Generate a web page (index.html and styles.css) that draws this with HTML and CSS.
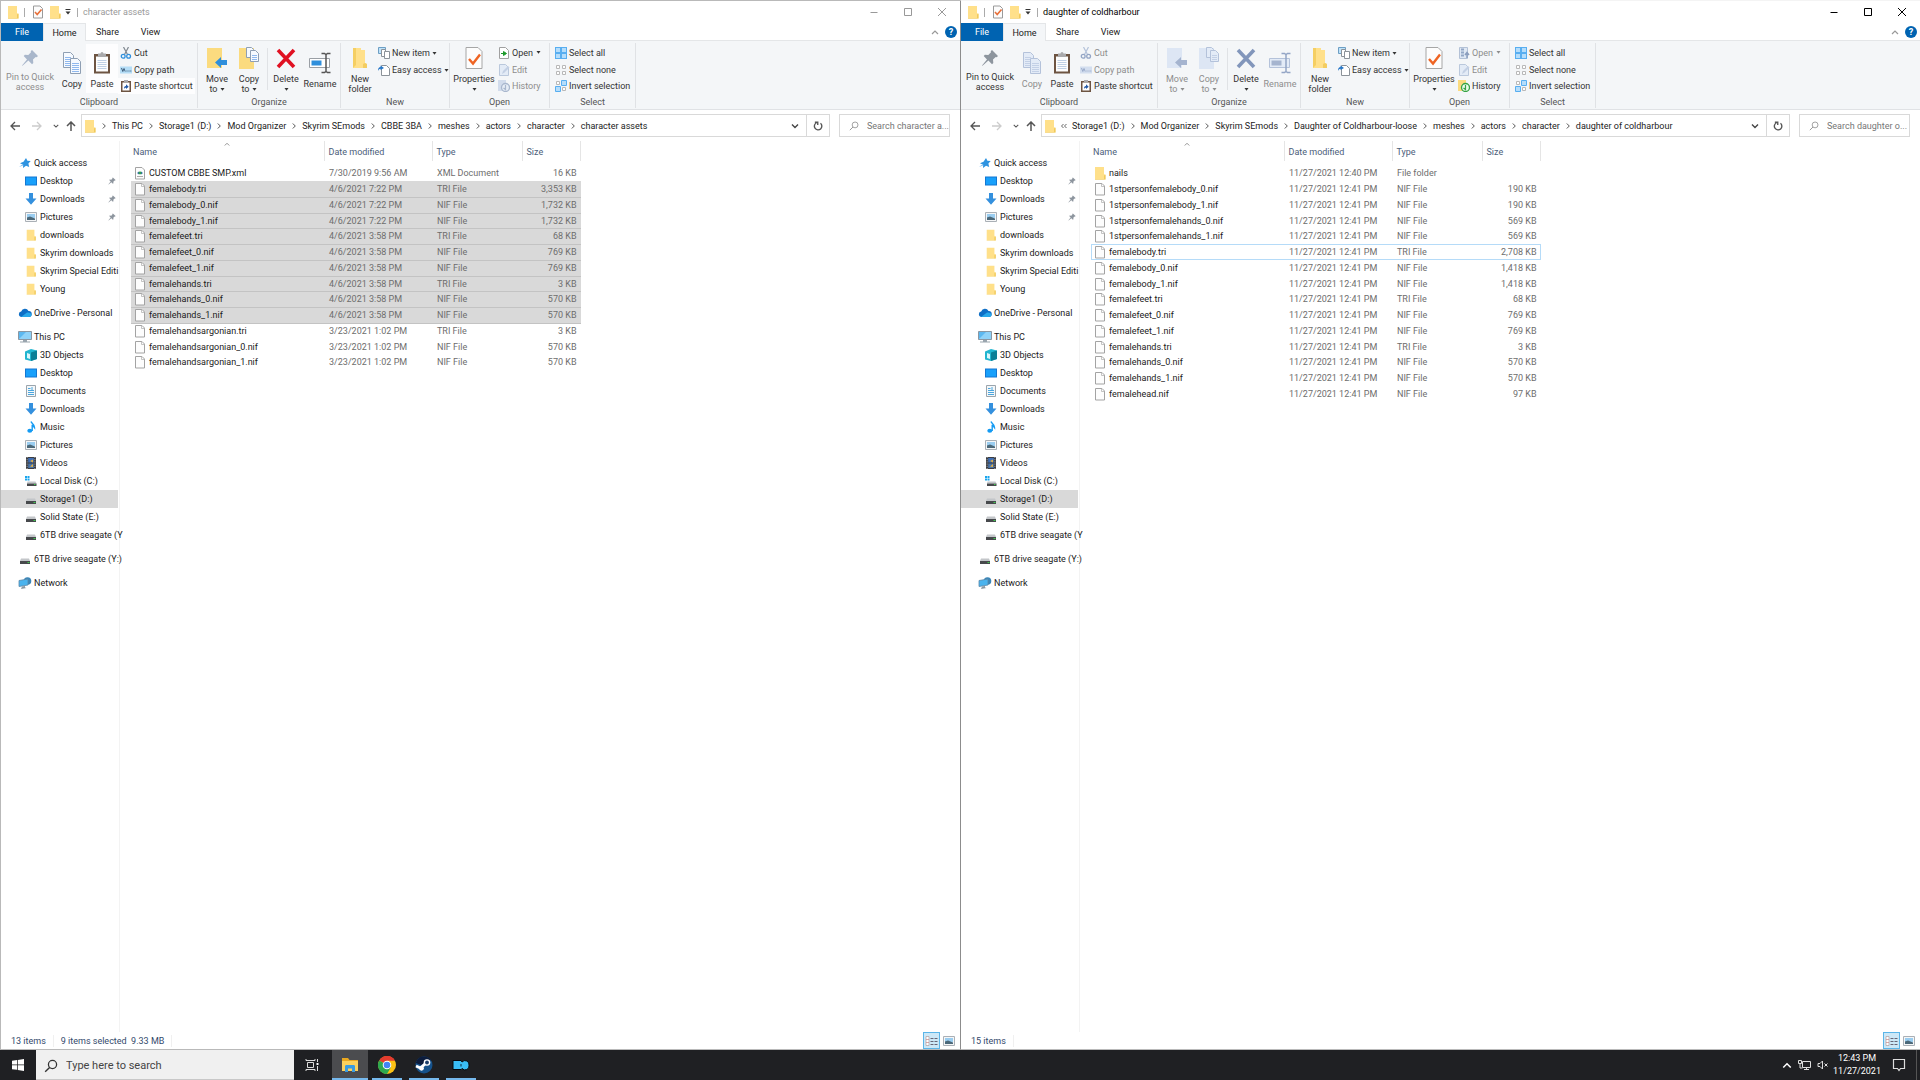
FILE: index.html
```html
<!DOCTYPE html>
<html lang="en">
<head>
<meta charset="utf-8">
<title>File Explorer</title>
<link rel="stylesheet" href="styles.css">
</head>
<body>
<svg class="sprite" aria-hidden="true">
  <symbol id="folder" viewBox="0 0 12 14"><path d="M1 1h9v7l1.500 1v4.500H1z" fill="#ffe08a"/><path d="M1 13h9V9.500L11.500 8.500v5H1z" fill="#f0c95c"/></symbol>
  <symbol id="tick" viewBox="0 0 12 14"><path d="M1.500 1h6.500l2.500 2.500V13h-9z" fill="#fcfcfc" stroke="#9a9a9a"/><path d="M3 7l2.200 2.600L9.500 4.500" fill="none" stroke="#e8703a" stroke-width="1.600"/></symbol>
  <symbol id="qat" viewBox="0 0 8 8"><path d="M1.500 1.500h5" stroke="#333"/><path d="M1.500 3.500h5L4 6.500z" fill="#333"/></symbol>
  <symbol id="min" viewBox="0 0 10 10"><path d="M1.500 5.500h7" stroke="currentColor"/></symbol>
  <symbol id="max" viewBox="0 0 10 10"><path d="M1.500 1.500h7v7h-7z" fill="none" stroke="currentColor"/></symbol>
  <symbol id="close" viewBox="0 0 10 10"><path d="M1 1l8 8M9 1L1 9" stroke="currentColor"/></symbol>
  <symbol id="up" viewBox="0 0 8 8"><path d="M1 6l3-3 3 3" fill="none" stroke="currentColor" stroke-width="1.200"/></symbol>
  <symbol id="down" viewBox="0 0 8 8"><path d="M1 2.500l3 3 3-3" fill="none" stroke="currentColor" stroke-width="1.400"/></symbol>
  <symbol id="right" viewBox="0 0 8 8"><path d="M2.800 1.500L5.300 4 2.800 6.500" fill="none" stroke="#555" stroke-width="1"/></symbol>
  <symbol id="laquo" viewBox="0 0 8 8"><path d="M3.500 2L1.500 4l2 2M6.500 2l-2 2 2 2" fill="none" stroke="#555" stroke-width=".9"/></symbol>
  <symbol id="pin" viewBox="0 0 18 18"><path d="M11 1l6 6-1.300 1.300-1-.4-2.700 2.700.3 3.400-1.300 1.200-3.600-3.600L1.500 16.800 1 16.500l5-6.100L2.700 7l1.200-1.300 3.400.3L10 3.300 9.700 2.300z" fill="var(--pin,#8d959e)"/></symbol>
  <symbol id="copy" viewBox="0 0 20 22"><g fill="var(--page,#f6faff)" stroke="var(--edge,#8f9fb3)"><path d="M1.500.5h7l3 3v12h-10z"/><path d="M8.500 6.500h7l3 3v12h-10z"/></g><path d="M3 5.500h6M3 7.500h5M3 9.500h5M3 11.500h5M3 13.500h5M10 11.500h7M10 13.500h7M10 15.500h7M10 17.500h7M10 19.500h7" stroke="var(--line,#8fb8ee)"/></symbol>
  <symbol id="paste" viewBox="0 0 18 22"><path d="M1 2h16v19.500H1z" fill="#6d5442"/><path d="M3 4.500h12v15H3z" fill="#fdfdfd"/><path d="M5 1.500h2.500a1.500 1.500 0 013 0H13V5H5z" fill="#a9a9ab"/><path d="M4.500 8.500h9M4.500 10.500h9M4.500 12.500h9M4.500 14.500h9M4.500 16.500h9" stroke="#bfd0e4"/></symbol>
  <symbol id="cut" viewBox="0 0 12 12"><path d="M3.500 0L7.500 7.500M8.500 0L4.500 7.500" stroke="var(--edge,#7f8790)" stroke-width="1.200"/><g fill="none" stroke="var(--cut,#2f8fdc)" stroke-width="1.300"><circle cx="3.200" cy="9.300" r="1.900"/><circle cx="8.600" cy="9.300" r="1.900"/></g></symbol>
  <symbol id="path" viewBox="0 0 12 12"><path d="M0 2.500h12v7H0z" fill="var(--bar,#b5ddf6)"/><path d="M1.500 4l1.300 3.500L4 4.500l1.200 3M6.500 7h1M8.500 7h1M10.300 7h1" fill="none" stroke="var(--ink,#33506e)" stroke-width=".9"/></symbol>
  <symbol id="shortcut" viewBox="0 0 12 12"><path d="M1 1h10v11H1z" fill="#6d5442"/><path d="M2.500 2.500h7v8h-7z" fill="#fff"/><path d="M4 0h4v2.500H4z" fill="#a9a9ab"/><path d="M4 9c0-2 .5-3 2-3V4.300L8.700 6.700 6 9V7.700C5 7.700 4.500 8 4 9z" fill="#2159a8"/></symbol>
  <symbol id="moveto" viewBox="0 0 20 22"><path d="M0 1h15v20H0z" fill="var(--fold,#fbdb7f)"/><path d="M14 10v3h6v5h-6v3L8 15.500z" fill="var(--arrow,#2f8fdc)"/></symbol>
  <symbol id="copyto" viewBox="0 0 20 22"><path d="M0 1h15v21H0z" fill="var(--fold,#fbdb7f)"/><g fill="var(--page,#f6faff)" stroke="var(--edge,#8f9fb3)"><path d="M7.500.5h5l2 2v8h-7z"/><path d="M11.500 3.500h5l3 3v8h-8z"/></g><path d="M13 8.500h5M13 10.500h5M13 12.500h5" stroke="var(--line,#8fb8ee)"/></symbol>
  <symbol id="delete" viewBox="0 0 20 20"><path d="M2 2l16 17M18 2L2 19" fill="none" stroke="var(--del,#e01122)" stroke-width="3.600"/></symbol>
  <symbol id="rename" viewBox="0 0 22 22"><path d="M.5 6.500h20v9H.5z" fill="var(--page,#fff)" stroke="var(--edge,#9a9fa5)"/><path d="M2.500 8.500h10v5h-10z" fill="var(--arrow,#2f8fdc)"/><path d="M12.500 1.500h3l1.500 1 1.500-1h3M12.500 20.500h3l1.500-1 1.500 1h3M17 2v18" fill="none" stroke="var(--beam,#555)" stroke-width="1.500"/></symbol>
  <symbol id="newfolder" viewBox="0 0 14 20"><path d="M0 0h8v2h4v13l2 1v4H0z" fill="#ffe08a"/><path d="M0 0h3v17l-3 3z" fill="#f5cf63"/><path d="M12 15l2 1v4h-4v-4z" fill="#f3cc60"/></symbol>
  <symbol id="newitem" viewBox="0 0 12 12"><path d="M.5.500h7v6h-7z" fill="#bfe2fa" stroke="#6d9fc4"/><path d="M3.500 2.500h4v7h-4z" fill="#fff" stroke="#8b9299"/><path d="M6.500 4.500h5v7h-5z" fill="#fff" stroke="#8b9299"/></symbol>
  <symbol id="easy" viewBox="0 0 12 12"><path d="M3.500 1.500h5l3 3v7h-8z" fill="#fff" stroke="#8b9299"/><path d="M0 7c0-3 1-4 2.500-4V1.500L6 4 2.500 6V4.800C1.500 4.800.8 5.500 0 7z" fill="#2878c8"/></symbol>
  <symbol id="props" viewBox="0 0 18 22"><path d="M1 .5h12l4 4v17H1z" fill="#fdfdfd" stroke="#a6a6a6"/><path d="M4 12l4 4.500 7-9" fill="none" stroke="#ef6423" stroke-width="2.400"/></symbol>
  <symbol id="open" viewBox="0 0 12 12"><path d="M1.500.500h6l3 3v8h-9z" fill="#fff" stroke="#a0a0a0"/><path d="M3 6.500h3M5.500 4.500v4l3-2z" fill="#1c9a2a" stroke="#1c9a2a"/></symbol>
  <symbol id="openoff" viewBox="0 0 12 12"><path d="M1.500.500h8v11h-8z" fill="#dfe8f4" stroke="#b3c1d6"/><path d="M3 2.500h3M3 5.500h3M3 8.500h3" stroke="#93a7c6" stroke-width="2"/><path d="M9 11V6M7 8l2-2.500L11 8" fill="none" stroke="#8a9dbd" stroke-width="1.500"/></symbol>
  <symbol id="edit" viewBox="0 0 12 12"><path d="M1.500.500h6l3 3v8h-9z" fill="#e3ebf6" stroke="#bac8dc"/><path d="M4 10l1-3 5-5 1.500 1.500-5 5z" fill="#c3d0e4"/></symbol>
  <symbol id="history" viewBox="0 0 12 12"><path d="M0 0h8v11H0z" fill="var(--hf,#d2dcec)"/><circle cx="7.500" cy="7.500" r="4" fill="var(--hc,#e6edf6)" stroke="var(--he,#a9b7cd)" stroke-width="1.300"/><path d="M5.500 8l2 1.500V5" fill="none" stroke="var(--he,#a9b7cd)" stroke-width="1.200"/></symbol>
  <symbol id="selall" viewBox="0 0 12 12"><path d="M0 0h12v12H0z" fill="#58aef0"/><path d="M1 1h4v4H1zM7 1h4v4H7zM1 7h4v4H1zM7 7h4v4H7z" fill="#b5ddfb"/></symbol>
  <symbol id="selnone" viewBox="0 0 12 12"><path d="M1.500 1.500h3v3h-3zM7.500 1.500h3v3h-3zM1.500 7.500h3v3h-3zM7.500 7.500h3v3h-3z" fill="#fff" stroke="#b8b8b8"/></symbol>
  <symbol id="selinv" viewBox="0 0 12 12"><path d="M1.500 1.500h3v3h-3zM7.500 7.500h3v3h-3z" fill="#fff" stroke="#b8b8b8"/><path d="M6.500.500h5v5h-5zM.5 6.500h5v5h-5z" fill="#b5ddfb" stroke="#58aef0"/></symbol>
  <symbol id="caret" viewBox="0 0 5 5"><path d="M.5 1h4L2.500 3.800z" fill="currentColor"/></symbol>
  <symbol id="back" viewBox="0 0 10 10"><path d="M5 1L1 5l4 4M1 5h9" fill="none" stroke="currentColor" stroke-width="1.300"/></symbol>
  <symbol id="fwd" viewBox="0 0 10 10"><path d="M5 1l4 4-4 4M9 5H0" fill="none" stroke="currentColor" stroke-width="1.300"/></symbol>
  <symbol id="upward" viewBox="0 0 10 10"><path d="M1 5l4-4 4 4M5 1v9" fill="none" stroke="currentColor" stroke-width="1.500"/></symbol>
  <symbol id="refresh" viewBox="0 0 8 8"><path d="M6 1.800a3 3 0 11-3.200-.4M1.500 1h2.300v2.200" fill="none" stroke="#555" stroke-width="1.100"/></symbol>
  <symbol id="glass" viewBox="0 0 12 12"><circle cx="7.300" cy="4.700" r="3.500" fill="none" stroke="currentColor" stroke-width="1.100"/><path d="M4.800 7.200L1 11" stroke="currentColor" stroke-width="1.200"/></symbol>
  <symbol id="star" viewBox="0 0 12 12"><path d="M7 1l1.400 2.800 3.300.2-2.300 2.500.8 3.600-3.200-1.400L4 11l.2-3.200L1 6.200l3.500-1.400z" fill="#2e93e0"/><path d="M0 10l4-3v1.500z" fill="#7cbcee"/></symbol>
  <symbol id="desktop" viewBox="0 0 12 12"><path d="M0 1.500h12v9H0z" fill="#1377d2"/><path d="M1 2.500h10v7H1z" fill="#18a0fb"/></symbol>
  <symbol id="dl" viewBox="0 0 12 12"><path d="M4 0h4v5.500h3.500L6 11.800.5 5.500H4z" fill="#3490de"/></symbol>
  <symbol id="pic" viewBox="0 0 12 12"><path d="M.5 1.500h11v9H.5z" fill="#f5f6f7" stroke="#aab0b6"/><path d="M2 3h8v4H2z" fill="#9acdf0"/><path d="M2 6.500l3-1 5 2V9H2z" fill="#4b6879"/></symbol>
  <symbol id="cloud" viewBox="0 0 14 12"><path d="M3 10a2.800 2.800 0 01.2-5.500A4 4 0 0110.500 4 3 3 0 0111 10z" fill="#0f6fc6"/><path d="M3 10l6-4.500c2 0 4.500.5 4.500 2.300S12.500 10 11 10z" fill="#28a8ea"/></symbol>
  <symbol id="pc" viewBox="0 0 14 12"><path d="M.5.500h13v8H.5z" fill="#5cb8f0" stroke="#8b97a2"/><path d="M1 8l7-7h5v7z" fill="#8fd2f8"/><path d="M5 9h4v1.500h3v1H2v-1h3z" fill="#9aa5ae"/></symbol>
  <symbol id="cube" viewBox="0 0 12 12"><path d="M0 2.500L6 0l6 1.500V10l-6 2-6-1.500z" fill="#21b5cf"/><path d="M6 3.500l6-2V10l-6 2z" fill="#0b7f96"/><path d="M2 4l3 1v5L2 9z" fill="#d9f6fb"/></symbol>
  <symbol id="doc" viewBox="0 0 12 12"><path d="M1.500.500h9v11h-9z" fill="#f4f7f9" stroke="#9ba5ad"/><path d="M3 3.500h2.500M3 5.500h6M3 7.500h6M3 9.500h6M7 2v3" stroke="#4ba6de"/></symbol>
  <symbol id="music" viewBox="0 0 12 12"><path d="M6 .5c.5 2 3.500 2.500 3.500 6-1-1.500-2-2-2.300-2V10" fill="none" stroke="#149bf3" stroke-width="1.400"/><ellipse cx="4.800" cy="9.800" rx="2.500" ry="2" fill="#149bf3"/></symbol>
  <symbol id="video" viewBox="0 0 12 12"><path d="M1 0h10v12H1z" fill="#3b3d42"/><path d="M3.200 1h5.600v4.500H3.200z" fill="#3f6fb5"/><path d="M3.200 6.500h5.600V11H3.200z" fill="#4a74a8"/><path d="M5 4l3-1.500v3zM5 9.500L8 7v3z" fill="#e0b04a"/><path d="M2.100 0v12M9.900 0v12" stroke="#c8c8c8" stroke-dasharray="1 1.200" stroke-width=".8"/></symbol>
  <symbol id="drive" viewBox="0 0 12 12"><path d="M2 5.500h8l1 2.500H1z" fill="#c3c6c9"/><path d="M1 8h10v3H1z" fill="#47494c"/><path d="M8.500 9h2v1h-2z" fill="#41c84e"/></symbol>
  <symbol id="cdrive" viewBox="0 0 12 12"><path d="M2.500 6.500h8l1 2H2z" fill="#c3c6c9"/><path d="M2 8.500h9.500V11H2z" fill="#47494c"/><path d="M9 9h1.500v1H9z" fill="#41c84e"/><path d="M0 1h2v2H0zM2.500 1h2v2h-2zM0 3.500h2v2H0zM2.500 3.500h2v2h-2z" fill="#18a5ee"/></symbol>
  <symbol id="net" viewBox="0 0 14 12"><circle cx="9.500" cy="4" r="3.800" fill="#3a86b8"/><path d="M1 3.500l9-1.500v6l-9 1.500z" fill="#4bb4ef" stroke="#5a88a8" stroke-width=".8"/><path d="M4 9.500l3-.5v1.500l1.500.5L3 12z" fill="#8a98a3"/></symbol>
  <symbol id="file" viewBox="0 0 12 14"><path d="M1.500 1.500H8L10.500 4v9h-9z" fill="#fdfdfd" stroke="#a3a3a3"/><path d="M7.500 1.500v3h3" fill="none" stroke="#b5b5b5" stroke-width=".8"/></symbol>
  <symbol id="xml" viewBox="0 0 12 14"><path d="M1.500 1.500H8L10.500 4v9h-9z" fill="#fdfdfd" stroke="#a3a3a3"/><path d="M3 7l2-1.500v3zM9 7L7 5.500v3z" fill="#2d6ca8"/><circle cx="6" cy="7" r="1.400" fill="#35a04e"/><path d="M3 10.500h6" stroke="#aaa"/></symbol>
  <symbol id="details" viewBox="0 0 13 12"><path d="M1 1.500h3v9H1z" fill="#fff" stroke="#b19d9d" stroke-width=".7"/><path d="M1 4.500h3M1 7.500h3" stroke="#c98787" stroke-width=".7"/><path d="M5.500 3.500h3M9.500 3.500h3M5.500 6.500h3M9.500 6.500h3M5.500 9.500h3M9.500 9.500h3" stroke="#667"/></symbol>
  <symbol id="win" viewBox="0 0 13 13"><path d="M0 2l5.500-.8V6H0zM6.300 1.100L13 0v6H6.300zM0 6.800h5.500v4.900L0 11zM6.300 6.800H13V13l-6.700-1z" fill="#fff"/></symbol>
  <symbol id="taskview" viewBox="0 0 14 14"><path d="M2.500 4.500h6v5h-6zM1 1v1.500h9V1M1 13v-1.500h9V13M12.500 1v3M12.500 8v5" fill="none" stroke="#ddd"/><path d="M11.500 5h2v2h-2z" fill="#fff"/></symbol>
  <symbol id="explorer" viewBox="0 0 18 16"><path d="M1 1h6l1.500 2H17v11H1z" fill="#e9a820"/><path d="M1 4h16v10H1z" fill="#fcd15c"/><path d="M4 15V9.500C4 8.500 4.500 8 5.500 8h7c1 0 1.500.5 1.500 1.500V15h-3v-3.500H7V15z" fill="#3a9be0"/></symbol>
  <symbol id="chrome" viewBox="0 0 18 18"><circle cx="9" cy="9" r="9" fill="#fbc116"/><path d="M9 9L1.200 4.500A9 9 0 0116.800 4.500H9z" fill="#e33b2e"/><path d="M9 0a9 9 0 017.800 4.500H9z" fill="#e33b2e"/><path d="M1.200 4.500A9 9 0 009 18l3.900-6.800L9 9z" fill="#2da94f"/><circle cx="9" cy="9" r="4.300" fill="#fff"/><circle cx="9" cy="9" r="3.300" fill="#4285f4"/></symbol>
  <symbol id="steam" viewBox="0 0 18 18"><circle cx="9" cy="9" r="8.500" fill="#15528c"/><path d="M.8 7A8.500 8.500 0 0116 4L6 9z" fill="#0c1c3c"/><path d="M1 10l4.500 2 5-4.500" fill="none" stroke="#fff" stroke-width="3"/><circle cx="12" cy="6.500" r="3.300" fill="#fff"/><circle cx="12" cy="6.500" r="1.900" fill="#1a3d6b"/><circle cx="6.500" cy="12.300" r="2.400" fill="#fff"/></symbol>
  <symbol id="mo" viewBox="0 0 18 12"><path d="M1 1.500h8l1 1.500a4 4 0 017 3.200A4 4 0 0110 9.500l-1 1H1z" fill="#39bdf5" stroke="#05080c"/><path d="M9 5v2.500" stroke="#0c2b3c"/></symbol>
  <symbol id="ethernet" viewBox="0 0 14 12"><path d="M4.500 2.500h8v6h-8zM6 10.500h5M8.500 8.500v2" fill="none" stroke="#ddd"/><path d="M.5 1.500h3v3h-3zM2 4.500V9h2.500" fill="none" stroke="#ddd"/></symbol>
  <symbol id="mute" viewBox="0 0 12 10"><path d="M1 3.500h2l2.500-2.500v8L3 6.500H1z" fill="none" stroke="#ddd"/><path d="M7.500 3.500l3 3M10.500 3.500l-3 3" stroke="#ddd"/></symbol>
  <symbol id="note" viewBox="0 0 14 14"><path d="M1.500 1.500h11v9H8.500l-1.500 2-1.500-2h-4z" fill="none" stroke="#ddd" stroke-width="1.200"/></symbol>
</svg>

<main class="desktop">
<section class="window inactive" aria-label="character assets">
  <header class="titlebar">
    <svg class="i12x14"><use href="#folder"/></svg><span class="bar"></span>
    <svg class="i12x14 check"><use href="#tick"/></svg><svg class="i12x14"><use href="#folder"/></svg><svg class="i8"><use href="#qat"/></svg><span class="bar"></span>
    <h1>character assets</h1>
    <div class="winbuttons"><button aria-label="Minimize"><svg><use href="#min"/></svg></button><button aria-label="Maximize"><svg><use href="#max"/></svg></button><button aria-label="Close"><svg><use href="#close"/></svg></button></div>
  </header>
  <nav class="tabs" aria-label="Ribbon tabs"><button class="filetab">File</button><button class="current">Home</button><button>Share</button><button>View</button><span class="help"><button aria-label="Collapse ribbon"><svg class="i8"><use href="#up"/></svg></button><button class="q" aria-label="Help">?</button></span></nav>
  <div class="ribbon">
    <div class="group clipboard"><div class="tools">
      <button class="big w56 off"><svg class="pinbig"><use href="#pin"/></svg>Pin to Quick<br>access</button>
      <button class="big w28"><svg class="i20x22"><use href="#copy"/></svg>Copy</button>
      <button class="big w32 hot"><svg class="i18x22"><use href="#paste"/></svg>Paste</button>
      <div class="stack"><button><svg class="i12"><use href="#cut"/></svg>Cut</button><button><svg class="i12"><use href="#path"/></svg>Copy path</button><button class="hot"><svg class="i12"><use href="#shortcut"/></svg>Paste shortcut</button></div>
    </div><div class="label">Clipboard</div></div>
    <div class="group organize"><div class="tools">
      <button class="big w32"><svg class="i20x22"><use href="#moveto"/></svg>Move<br>to <svg class="i5"><use href="#caret"/></svg></button>
      <button class="big w32"><svg class="i20x22"><use href="#copyto"/></svg>Copy<br>to <svg class="i5"><use href="#caret"/></svg></button>
      <span class="split"></span>
      <button class="big w32"><svg class="i20x22"><use href="#delete"/></svg>Delete<br><svg class="i5"><use href="#caret"/></svg></button>
      <button class="big w36"><svg class="i22"><use href="#rename"/></svg>Rename</button>
    </div><div class="label">Organize</div></div>
    <div class="group new"><div class="tools">
      <button class="big w32"><svg class="i14x22"><use href="#newfolder"/></svg>New<br>folder</button>
      <div class="stack"><button><svg class="i12"><use href="#newitem"/></svg>New item <svg class="i5"><use href="#caret"/></svg></button><button><svg class="i12"><use href="#easy"/></svg>Easy access <svg class="i5"><use href="#caret"/></svg></button></div>
    </div><div class="label">New</div></div>
    <div class="group opens"><div class="tools">
      <button class="big w44"><svg class="i18x22"><use href="#props"/></svg>Properties<br><svg class="i5"><use href="#caret"/></svg></button>
      <div class="stack"><button><svg class="i12"><use href="#open"/></svg>Open <svg class="i5 far"><use href="#caret"/></svg></button><button class="off"><svg class="i12"><use href="#edit"/></svg>Edit</button><button class="off"><svg class="i12"><use href="#history"/></svg>History</button></div>
    </div><div class="label">Open</div></div>
    <div class="group select"><div class="tools">
      <div class="stack"><button><svg class="i12"><use href="#selall"/></svg>Select all</button><button><svg class="i12"><use href="#selnone"/></svg>Select none</button><button><svg class="i12"><use href="#selinv"/></svg>Invert selection</button></div>
    </div><div class="label">Select</div></div>
  </div>
  <div class="location">
    <div class="arrows"><button aria-label="Back"><svg class="i10"><use href="#back"/></svg></button><button class="dim" aria-label="Forward"><svg class="i10"><use href="#fwd"/></svg></button><button aria-label="Recent"><svg class="i6"><use href="#down"/></svg></button><button aria-label="Up"><svg class="i10"><use href="#upward"/></svg></button></div>
    <div class="address"><svg class="i12x14"><use href="#folder"/></svg><svg class="i8"><use href="#right"/></svg><a href="#">This PC</a><svg class="i8"><use href="#right"/></svg><a href="#">Storage1 (D:)</a><svg class="i8"><use href="#right"/></svg><a href="#">Mod Organizer</a><svg class="i8"><use href="#right"/></svg><a href="#">Skyrim SEmods</a><svg class="i8"><use href="#right"/></svg><a href="#">CBBE 3BA</a><svg class="i8"><use href="#right"/></svg><a href="#">meshes</a><svg class="i8"><use href="#right"/></svg><a href="#">actors</a><svg class="i8"><use href="#right"/></svg><a href="#">character</a><svg class="i8"><use href="#right"/></svg><a href="#">character assets</a>
      <button class="drop" aria-label="Previous locations"><svg class="i8"><use href="#down"/></svg></button><button class="reload" aria-label="Refresh"><svg class="i10"><use href="#refresh"/></svg></button></div>
    <label class="search"><svg class="i10"><use href="#glass"/></svg><input type="search" aria-label="Search" placeholder="Search character a..."></label>
  </div>
  <div class="panes">
    <nav class="tree" aria-label="Folders">
      <ul><li><a href="#" class="root"><svg class="i14x12"><use href="#star"/></svg>Quick access</a></li>
      <li><a href="#"><svg class="i12"><use href="#desktop"/></svg>Desktop<svg class="pinned"><use href="#pin"/></svg></a></li>
      <li><a href="#"><svg class="i12"><use href="#dl"/></svg>Downloads<svg class="pinned"><use href="#pin"/></svg></a></li>
      <li><a href="#"><svg class="i12"><use href="#pic"/></svg>Pictures<svg class="pinned"><use href="#pin"/></svg></a></li>
      <li><a href="#"><svg class="i12"><use href="#folder"/></svg>downloads</a></li>
      <li><a href="#"><svg class="i12"><use href="#folder"/></svg>Skyrim downloads</a></li>
      <li><a href="#"><svg class="i12"><use href="#folder"/></svg>Skyrim Special Editi</a></li>
      <li><a href="#"><svg class="i12"><use href="#folder"/></svg>Young</a></li></ul>
      <ul><li><a href="#" class="root"><svg class="i14x12"><use href="#cloud"/></svg>OneDrive - Personal</a></li></ul>
      <ul><li><a href="#" class="root"><svg class="i14x12"><use href="#pc"/></svg>This PC</a></li>
      <li><a href="#"><svg class="i12"><use href="#cube"/></svg>3D Objects</a></li>
      <li><a href="#"><svg class="i12"><use href="#desktop"/></svg>Desktop</a></li>
      <li><a href="#"><svg class="i12"><use href="#doc"/></svg>Documents</a></li>
      <li><a href="#"><svg class="i12"><use href="#dl"/></svg>Downloads</a></li>
      <li><a href="#"><svg class="i12"><use href="#music"/></svg>Music</a></li>
      <li><a href="#"><svg class="i12"><use href="#pic"/></svg>Pictures</a></li>
      <li><a href="#"><svg class="i12"><use href="#video"/></svg>Videos</a></li>
      <li><a href="#"><svg class="i12"><use href="#cdrive"/></svg>Local Disk (C:)</a></li>
      <li><a href="#" class="picked"><svg class="i12"><use href="#drive"/></svg>Storage1 (D:)</a></li>
      <li><a href="#"><svg class="i12"><use href="#drive"/></svg>Solid State (E:)</a></li>
      <li><a href="#"><svg class="i12"><use href="#drive"/></svg>6TB drive seagate (Y</a></li></ul>
      <ul><li><a href="#" class="root"><svg class="i14x12"><use href="#drive"/></svg>6TB drive seagate (Y:)</a></li></ul>
      <ul><li><a href="#" class="root"><svg class="i14x12"><use href="#net"/></svg>Network</a></li></ul>
    </nav>
    <div class="files">
      <table>
        <thead><tr><th class="name">Name<svg class="sort"><use href="#up"/></svg></th><th class="date">Date modified</th><th class="type">Type</th><th class="size">Size</th></tr></thead>
        <tbody>
        <tr><td><svg class="i12x14"><use href="#xml"/></svg>CUSTOM CBBE SMP.xml</td><td>7/30/2019 9:56 AM</td><td>XML Document</td><td>16 KB</td></tr>
        <tr class="sel"><td><svg class="i12x14"><use href="#file"/></svg>femalebody.tri</td><td>4/6/2021 7:22 PM</td><td>TRI File</td><td>3,353 KB</td></tr>
        <tr class="sel"><td><svg class="i12x14"><use href="#file"/></svg>femalebody_0.nif</td><td>4/6/2021 7:22 PM</td><td>NIF File</td><td>1,732 KB</td></tr>
        <tr class="sel"><td><svg class="i12x14"><use href="#file"/></svg>femalebody_1.nif</td><td>4/6/2021 7:22 PM</td><td>NIF File</td><td>1,732 KB</td></tr>
        <tr class="sel"><td><svg class="i12x14"><use href="#file"/></svg>femalefeet.tri</td><td>4/6/2021 3:58 PM</td><td>TRI File</td><td>68 KB</td></tr>
        <tr class="sel"><td><svg class="i12x14"><use href="#file"/></svg>femalefeet_0.nif</td><td>4/6/2021 3:58 PM</td><td>NIF File</td><td>769 KB</td></tr>
        <tr class="sel"><td><svg class="i12x14"><use href="#file"/></svg>femalefeet_1.nif</td><td>4/6/2021 3:58 PM</td><td>NIF File</td><td>769 KB</td></tr>
        <tr class="sel"><td><svg class="i12x14"><use href="#file"/></svg>femalehands.tri</td><td>4/6/2021 3:58 PM</td><td>TRI File</td><td>3 KB</td></tr>
        <tr class="sel"><td><svg class="i12x14"><use href="#file"/></svg>femalehands_0.nif</td><td>4/6/2021 3:58 PM</td><td>NIF File</td><td>570 KB</td></tr>
        <tr class="sel"><td><svg class="i12x14"><use href="#file"/></svg>femalehands_1.nif</td><td>4/6/2021 3:58 PM</td><td>NIF File</td><td>570 KB</td></tr>
        <tr><td><svg class="i12x14"><use href="#file"/></svg>femalehandsargonian.tri</td><td>3/23/2021 1:02 PM</td><td>TRI File</td><td>3 KB</td></tr>
        <tr><td><svg class="i12x14"><use href="#file"/></svg>femalehandsargonian_0.nif</td><td>3/23/2021 1:02 PM</td><td>NIF File</td><td>570 KB</td></tr>
        <tr><td><svg class="i12x14"><use href="#file"/></svg>femalehandsargonian_1.nif</td><td>3/23/2021 1:02 PM</td><td>NIF File</td><td>570 KB</td></tr>
        </tbody>
      </table>
    </div>
  </div>
  <footer class="status"><span>13 items</span><span>9 items selected&nbsp; 9.33 MB</span><div class="views"><button class="on" aria-label="Details"><svg class="details"><use href="#details"/></svg></button><button aria-label="Large icons"><svg class="i12"><use href="#pic"/></svg></button></div></footer>
</section>

<section class="window" aria-label="daughter of coldharbour">
  <header class="titlebar">
    <svg class="i12x14"><use href="#folder"/></svg><span class="bar"></span>
    <svg class="i12x14 check"><use href="#tick"/></svg><svg class="i12x14"><use href="#folder"/></svg><svg class="i8"><use href="#qat"/></svg><span class="bar"></span>
    <h1>daughter of coldharbour</h1>
    <div class="winbuttons"><button aria-label="Minimize"><svg><use href="#min"/></svg></button><button aria-label="Maximize"><svg><use href="#max"/></svg></button><button aria-label="Close"><svg><use href="#close"/></svg></button></div>
  </header>
  <nav class="tabs" aria-label="Ribbon tabs"><button class="filetab">File</button><button class="current">Home</button><button>Share</button><button>View</button><span class="help"><button aria-label="Collapse ribbon"><svg class="i8"><use href="#up"/></svg></button><button class="q" aria-label="Help">?</button></span></nav>
  <div class="ribbon">
    <div class="group clipboard"><div class="tools">
      <button class="big w56"><svg class="pinbig"><use href="#pin"/></svg>Pin to Quick<br>access</button>
      <button class="big w28 off"><svg class="i20x22"><use href="#copy"/></svg>Copy</button>
      <button class="big w32"><svg class="i18x22"><use href="#paste"/></svg>Paste</button>
      <div class="stack"><button class="off"><svg class="i12"><use href="#cut"/></svg>Cut</button><button class="off"><svg class="i12"><use href="#path"/></svg>Copy path</button><button><svg class="i12"><use href="#shortcut"/></svg>Paste shortcut</button></div>
    </div><div class="label">Clipboard</div></div>
    <div class="group organize"><div class="tools">
      <button class="big w32 off"><svg class="i20x22"><use href="#moveto"/></svg>Move<br>to <svg class="i5"><use href="#caret"/></svg></button>
      <button class="big w32 off"><svg class="i20x22"><use href="#copyto"/></svg>Copy<br>to <svg class="i5"><use href="#caret"/></svg></button>
      <span class="split"></span>
      <button class="big w32 faded"><svg class="i20x22"><use href="#delete"/></svg>Delete<br><svg class="i5"><use href="#caret"/></svg></button>
      <button class="big w36 off"><svg class="i22"><use href="#rename"/></svg>Rename</button>
    </div><div class="label">Organize</div></div>
    <div class="group new"><div class="tools">
      <button class="big w32"><svg class="i14x22"><use href="#newfolder"/></svg>New<br>folder</button>
      <div class="stack"><button><svg class="i12"><use href="#newitem"/></svg>New item <svg class="i5"><use href="#caret"/></svg></button><button><svg class="i12"><use href="#easy"/></svg>Easy access <svg class="i5"><use href="#caret"/></svg></button></div>
    </div><div class="label">New</div></div>
    <div class="group opens"><div class="tools">
      <button class="big w44"><svg class="i18x22"><use href="#props"/></svg>Properties<br><svg class="i5"><use href="#caret"/></svg></button>
      <div class="stack"><button class="off"><svg class="i12"><use href="#openoff"/></svg>Open <svg class="i5 far"><use href="#caret"/></svg></button><button class="off"><svg class="i12"><use href="#edit"/></svg>Edit</button><button class="lit"><svg class="i12"><use href="#history"/></svg>History</button></div>
    </div><div class="label">Open</div></div>
    <div class="group select"><div class="tools">
      <div class="stack"><button><svg class="i12"><use href="#selall"/></svg>Select all</button><button><svg class="i12"><use href="#selnone"/></svg>Select none</button><button><svg class="i12"><use href="#selinv"/></svg>Invert selection</button></div>
    </div><div class="label">Select</div></div>
  </div>
  <div class="location">
    <div class="arrows"><button aria-label="Back"><svg class="i10"><use href="#back"/></svg></button><button class="dim" aria-label="Forward"><svg class="i10"><use href="#fwd"/></svg></button><button aria-label="Recent"><svg class="i6"><use href="#down"/></svg></button><button aria-label="Up"><svg class="i10"><use href="#upward"/></svg></button></div>
    <div class="address"><svg class="i12x14"><use href="#folder"/></svg><svg class="i8"><use href="#laquo"/></svg><a href="#">Storage1 (D:)</a><svg class="i8"><use href="#right"/></svg><a href="#">Mod Organizer</a><svg class="i8"><use href="#right"/></svg><a href="#">Skyrim SEmods</a><svg class="i8"><use href="#right"/></svg><a href="#">Daughter of Coldharbour-loose</a><svg class="i8"><use href="#right"/></svg><a href="#">meshes</a><svg class="i8"><use href="#right"/></svg><a href="#">actors</a><svg class="i8"><use href="#right"/></svg><a href="#">character</a><svg class="i8"><use href="#right"/></svg><a href="#">daughter of coldharbour</a>
      <button class="drop" aria-label="Previous locations"><svg class="i8"><use href="#down"/></svg></button><button class="reload" aria-label="Refresh"><svg class="i10"><use href="#refresh"/></svg></button></div>
    <label class="search"><svg class="i10"><use href="#glass"/></svg><input type="search" aria-label="Search" placeholder="Search daughter o..."></label>
  </div>
  <div class="panes">
    <nav class="tree" aria-label="Folders">
      <ul><li><a href="#" class="root"><svg class="i14x12"><use href="#star"/></svg>Quick access</a></li>
      <li><a href="#"><svg class="i12"><use href="#desktop"/></svg>Desktop<svg class="pinned"><use href="#pin"/></svg></a></li>
      <li><a href="#"><svg class="i12"><use href="#dl"/></svg>Downloads<svg class="pinned"><use href="#pin"/></svg></a></li>
      <li><a href="#"><svg class="i12"><use href="#pic"/></svg>Pictures<svg class="pinned"><use href="#pin"/></svg></a></li>
      <li><a href="#"><svg class="i12"><use href="#folder"/></svg>downloads</a></li>
      <li><a href="#"><svg class="i12"><use href="#folder"/></svg>Skyrim downloads</a></li>
      <li><a href="#"><svg class="i12"><use href="#folder"/></svg>Skyrim Special Editi</a></li>
      <li><a href="#"><svg class="i12"><use href="#folder"/></svg>Young</a></li></ul>
      <ul><li><a href="#" class="root"><svg class="i14x12"><use href="#cloud"/></svg>OneDrive - Personal</a></li></ul>
      <ul><li><a href="#" class="root"><svg class="i14x12"><use href="#pc"/></svg>This PC</a></li>
      <li><a href="#"><svg class="i12"><use href="#cube"/></svg>3D Objects</a></li>
      <li><a href="#"><svg class="i12"><use href="#desktop"/></svg>Desktop</a></li>
      <li><a href="#"><svg class="i12"><use href="#doc"/></svg>Documents</a></li>
      <li><a href="#"><svg class="i12"><use href="#dl"/></svg>Downloads</a></li>
      <li><a href="#"><svg class="i12"><use href="#music"/></svg>Music</a></li>
      <li><a href="#"><svg class="i12"><use href="#pic"/></svg>Pictures</a></li>
      <li><a href="#"><svg class="i12"><use href="#video"/></svg>Videos</a></li>
      <li><a href="#"><svg class="i12"><use href="#cdrive"/></svg>Local Disk (C:)</a></li>
      <li><a href="#" class="picked"><svg class="i12"><use href="#drive"/></svg>Storage1 (D:)</a></li>
      <li><a href="#"><svg class="i12"><use href="#drive"/></svg>Solid State (E:)</a></li>
      <li><a href="#"><svg class="i12"><use href="#drive"/></svg>6TB drive seagate (Y</a></li></ul>
      <ul><li><a href="#" class="root"><svg class="i14x12"><use href="#drive"/></svg>6TB drive seagate (Y:)</a></li></ul>
      <ul><li><a href="#" class="root"><svg class="i14x12"><use href="#net"/></svg>Network</a></li></ul>
    </nav>
    <div class="files">
      <table>
        <thead><tr><th class="name">Name<svg class="sort"><use href="#up"/></svg></th><th class="date">Date modified</th><th class="type">Type</th><th class="size">Size</th></tr></thead>
        <tbody>
        <tr><td><svg class="i12x14"><use href="#folder"/></svg>nails</td><td>11/27/2021 12:40 PM</td><td>File folder</td><td></td></tr>
        <tr><td><svg class="i12x14"><use href="#file"/></svg>1stpersonfemalebody_0.nif</td><td>11/27/2021 12:41 PM</td><td>NIF File</td><td>190 KB</td></tr>
        <tr><td><svg class="i12x14"><use href="#file"/></svg>1stpersonfemalebody_1.nif</td><td>11/27/2021 12:41 PM</td><td>NIF File</td><td>190 KB</td></tr>
        <tr><td><svg class="i12x14"><use href="#file"/></svg>1stpersonfemalehands_0.nif</td><td>11/27/2021 12:41 PM</td><td>NIF File</td><td>569 KB</td></tr>
        <tr><td><svg class="i12x14"><use href="#file"/></svg>1stpersonfemalehands_1.nif</td><td>11/27/2021 12:41 PM</td><td>NIF File</td><td>569 KB</td></tr>
        <tr class="focus"><td><svg class="i12x14"><use href="#file"/></svg>femalebody.tri</td><td>11/27/2021 12:41 PM</td><td>TRI File</td><td>2,708 KB</td></tr>
        <tr><td><svg class="i12x14"><use href="#file"/></svg>femalebody_0.nif</td><td>11/27/2021 12:41 PM</td><td>NIF File</td><td>1,418 KB</td></tr>
        <tr><td><svg class="i12x14"><use href="#file"/></svg>femalebody_1.nif</td><td>11/27/2021 12:41 PM</td><td>NIF File</td><td>1,418 KB</td></tr>
        <tr><td><svg class="i12x14"><use href="#file"/></svg>femalefeet.tri</td><td>11/27/2021 12:41 PM</td><td>TRI File</td><td>68 KB</td></tr>
        <tr><td><svg class="i12x14"><use href="#file"/></svg>femalefeet_0.nif</td><td>11/27/2021 12:41 PM</td><td>NIF File</td><td>769 KB</td></tr>
        <tr><td><svg class="i12x14"><use href="#file"/></svg>femalefeet_1.nif</td><td>11/27/2021 12:41 PM</td><td>NIF File</td><td>769 KB</td></tr>
        <tr><td><svg class="i12x14"><use href="#file"/></svg>femalehands.tri</td><td>11/27/2021 12:41 PM</td><td>TRI File</td><td>3 KB</td></tr>
        <tr><td><svg class="i12x14"><use href="#file"/></svg>femalehands_0.nif</td><td>11/27/2021 12:41 PM</td><td>NIF File</td><td>570 KB</td></tr>
        <tr><td><svg class="i12x14"><use href="#file"/></svg>femalehands_1.nif</td><td>11/27/2021 12:41 PM</td><td>NIF File</td><td>570 KB</td></tr>
        <tr><td><svg class="i12x14"><use href="#file"/></svg>femalehead.nif</td><td>11/27/2021 12:41 PM</td><td>NIF File</td><td>97 KB</td></tr>
        </tbody>
      </table>
    </div>
  </div>
  <footer class="status"><span>15 items</span><div class="views"><button class="on" aria-label="Details"><svg class="details"><use href="#details"/></svg></button><button aria-label="Large icons"><svg class="i12"><use href="#pic"/></svg></button></div></footer>
</section>
</main>

<footer class="taskbar">
  <button class="start" aria-label="Start"><svg class="i12"><use href="#win"/></svg></button>
  <label class="cortana"><svg class="i14"><use href="#glass"/></svg><input type="text" aria-label="Search Windows" placeholder="Type here to search"></label>
  <button class="app" aria-label="Task view"><svg class="i14"><use href="#taskview"/></svg></button>
  <button class="app running front" aria-label="File Explorer"><svg class="i18"><use href="#explorer"/></svg></button>
  <button class="app running" aria-label="Chrome"><svg class="i18"><use href="#chrome"/></svg></button>
  <button class="app running" aria-label="Steam"><svg class="i18"><use href="#steam"/></svg></button>
  <button class="app running" aria-label="Mod Organizer"><svg class="i18"><use href="#mo"/></svg></button>
  <div class="tray"><button aria-label="Hidden icons"><svg class="i10"><use href="#up"/></svg></button><button aria-label="Network"><svg class="i14"><use href="#ethernet"/></svg></button><button aria-label="Volume"><svg class="i12"><use href="#mute"/></svg></button><time datetime="2021-11-27T12:43">12:43 PM<br>11/27/2021</time><button class="notes" aria-label="Notifications"><svg class="i14"><use href="#note"/></svg></button></div>
</footer>
</body>
</html>
```
FILE: styles.css
```css
* { box-sizing: border-box; }
body { margin: 0; min-height: 100vh; display: flex; flex-direction: column; background: #fff; color: #1a1a1a; font: 9px/12px Roboto, "Open Sans", sans-serif; }
button { font: inherit; color: inherit; background: none; border: 0; padding: 0; margin: 0; white-space: nowrap; }
a { color: inherit; text-decoration: none; white-space: nowrap; }
svg { flex: none; }
ul { list-style: none; margin: 0; padding: 0; }
.sprite { display: none; }

.i5 { width: 5px; height: 5px; }
.i6 { width: 6px; height: 6px; }
.i8 { width: 8px; height: 8px; }
.i10 { width: 10px; height: 10px; }
.i12 { width: 12px; height: 12px; }
.i14 { width: 14px; height: 14px; }
.i18 { width: 18px; height: 18px; }
.i22 { width: 22px; height: 22px; }
.i12x14 { width: 12px; height: 14px; }
.i14x12 { width: 14px; height: 12px; }
.i14x22 { width: 14px; height: 22px; }
.i18x22 { width: 18px; height: 22px; }
.i20x22 { width: 20px; height: 22px; }

.desktop { flex: 1; display: grid; grid-template-columns: 1fr 1fr; }
.window { min-width: 0; display: flex; flex-direction: column; background: #fff; border: 1px solid #b9b9b9; border-width: 1px 0 1px 1px; }
.window + .window { border-top-color: #f4f4f4; border-left-color: #8c8c8c; }

.titlebar { height: 22px; display: flex; align-items: center; padding-left: 6px; color: #000; }
.titlebar h1 { margin: 0; font: inherit; }
.bar { width: 1px; height: 9px; margin: 0 5px; background: #aaa; }
.check { margin: 0 5px 0 2px; }
.titlebar .i8 { margin-left: 3px; }
.inactive .titlebar { color: #999; }
.winbuttons { margin-left: auto; padding-right: 1px; display: flex; }
.winbuttons button { width: 34px; height: 22px; display: grid; place-items: center; }
.winbuttons svg { width: 10px; height: 10px; }

.tabs { height: 18px; display: flex; border-bottom: 1px solid #e4e6e8; }
.tabs > button { width: 43px; height: 18px; }
.tabs .filetab { width: 42px; background: #0063b1; color: #fff; }
.tabs .current { background: #f4f6f8; border: 1px solid #e4e6e8; border-bottom: 0; }
.help { margin-left: auto; display: flex; align-items: center; gap: 6px; padding-right: 3px; color: #999; }
.help button { display: grid; place-items: center; }
.help .q { width: 12px; height: 12px; border-radius: 50%; background: #0063b1; color: #fff; font-weight: 700; }

.ribbon { height: 69px; display: flex; padding-top: 2px; background: #f4f6f8; border-bottom: 1px solid #e0e2e5; }
.group { height: 65px; display: flex; flex-direction: column; justify-content: space-between; border-right: 1px solid #e0e2e5; }
.clipboard { width: 197px; }
.organize { width: 143px; }
.new { width: 109px; }
.opens { width: 100px; }
.select { width: 86px; }
.tools { display: flex; padding: 1px 2px 0; height: 52px; }
.label { text-align: center; color: #555; height: 11px; line-height: 11px; }
.big { height: 49px; padding-top: 3px; line-height: 10px; display: block; text-align: center; color: #333; flex: none; }
.big > svg:first-child { display: block; margin: 0 auto 5px; }
.big .pinbig { width: 18px; height: 18px; margin: 2px auto 7px; }
.w28 { width: 28px; }
.w32 { width: 32px; }
.w36 { width: 36px; }
.w44 { width: 44px; }
.w56 { width: 56px; }
.split { width: 1px; height: 42px; margin: 4px 2px 0; background: #e0e2e5; }
.stack { display: flex; flex-direction: column; align-items: flex-start; padding-top: 1px; color: #333; }
.stack button { height: 16px; margin-bottom: 1px; padding: 0 2px; display: flex; align-items: center; gap: 2px; }
.hot { background: #fdfdfe; }
.clipboard .tools { padding-left: 1px; }
.organize .tools, .new .tools, .select .tools { padding-left: 3px; }
.far { margin-left: 1px; }
.off { color: #8d8d8d; --pin: #a9b7cb; --page: #e3ebf7; --edge: #b4c2da; --line: #c3d0e6; --fold: #dde6f4; --arrow: #a5b4cf; --beam: #93a5c5; --cut: #93a5c5; --bar: #d3deef; --ink: #93a5c5; }
.faded { --del: #8296bb; }
.lit { --hf: #fbdb7f; --hc: #eafbea; --he: #36a344; }

.location { height: 31px; display: flex; align-items: center; padding: 0 10px 0 5px; }
.arrows { display: flex; align-items: center; width: 75px; color: #555; }
.arrows button { width: 18px; height: 20px; display: grid; place-items: center; }
.arrows .dim { width: 26px; color: #ccc; }
.arrows button:nth-child(3) { width: 12px; }
.address { flex: 1; min-width: 0; height: 23px; display: flex; align-items: center; gap: 4px; padding-left: 2px; border: 1px solid #d9d9d9; color: #222; }
.address button { display: grid; place-items: center; align-self: stretch; }
.drop { width: 23px; margin-left: auto; margin-right: -4px; color: #444; }
.address .reload { width: 23px; border-left: 1px solid #d9d9d9; }
.search { width: 111px; height: 23px; margin-left: 9px; display: flex; align-items: center; padding-left: 9px; border: 1px solid #d9d9d9; color: #999; }
.search input { flex: 1; min-width: 0; margin-left: 8px; padding: 0; border: 0; outline: 0; font: inherit; background: none; appearance: none; }
.search input::-webkit-search-cancel-button { display: none; }
.search input::placeholder { color: #767676; }

.panes { flex: 1; display: flex; }
.tree { width: 119px; padding: 13px 1px 0 0; border-right: 1px solid #f3f3f3; }
.tree ul { margin-bottom: 6px; }
.tree a { height: 18px; display: flex; align-items: center; gap: 3px; padding-left: 24px; }
.tree .root { padding-left: 17px; gap: 2px; }
.tree .picked { background: #d9d9d9; }
.pinned { width: 8px; height: 8px; margin: 0 2px 0 auto; }

.files { flex: 1; min-width: 0; padding-left: 11px; }
table { width: 450px; border-collapse: collapse; table-layout: fixed; }
th { height: 20px; padding: 1px 0 0 4px; text-align: left; font-weight: 400; color: #4c607a; border-right: 1px solid #e5e5e5; position: relative; }
th.name { width: 193px; padding-left: 2px; }
th.date { width: 108px; }
th.type { width: 90px; }
.sort { position: absolute; left: 92px; top: 0; width: 8px; height: 6px; color: #888; }
thead::after { content: ""; display: table-row; height: 4px; }
td { height: 16px; padding: 0 0 0 5px; color: #6d6d6d; white-space: nowrap; line-height: 14px; }
tr:nth-child(4n) td { height: 15px; }
td:first-child { color: #1a1a1a; padding-left: 3px; }
td:last-child { text-align: right; padding-right: 4px; }
td svg { vertical-align: top; margin-right: 3px; }
.sel { background: #d9d9d9; border-bottom: 1px solid #c3c3c3; }
.focus { outline: 1px solid #b5dbf8; outline-offset: -1px; }

.status { height: 17px; display: flex; align-items: center; padding-left: 10px; color: #33496b; }
.status span { padding-right: 7px; margin-right: 7px; border-right: 1px solid #f0f0f0; }
.views { margin-left: auto; display: flex; padding-right: 3px; }
.views button { width: 17px; height: 17px; display: grid; place-items: center; }
.views .on { background: #cce8f7; border: 1px solid #5bb5e8; }
.details { width: 13px; height: 12px; }

.taskbar { height: 30px; display: flex; background: #1f2023; color: #fff; }
.taskbar button { display: grid; place-items: center; }
.start { width: 36px; }
.cortana { width: 258px; display: flex; align-items: center; padding: 2px 0 0 8px; background: #f0f0f0; border-bottom: 1px solid #c8c8c8; color: #333; }
.cortana input { flex: 1; min-width: 0; margin-left: 8px; padding: 0; border: 0; outline: 0; background: none; font: 11px/14px Roboto, "Open Sans", sans-serif; }
.cortana input::placeholder { color: #444; }
.taskbar .app { width: 36px; margin-right: 2px; border-bottom: 2px solid transparent; padding-top: 2px; }
.taskbar .running { border-bottom-color: #76b9ed; width: 30px; margin: 0 3px 0 4px; }
.taskbar .front { width: 36px; background: #4b4c4f; margin: 0; }
.tray { margin-left: auto; display: flex; align-items: center; padding-right: 3px; }
.tray button { width: 18px; height: 30px; }
.tray time { width: 50px; text-align: center; line-height: 13px; }
.tray .notes { width: 35px; border-right: 1px solid #555; }
```
